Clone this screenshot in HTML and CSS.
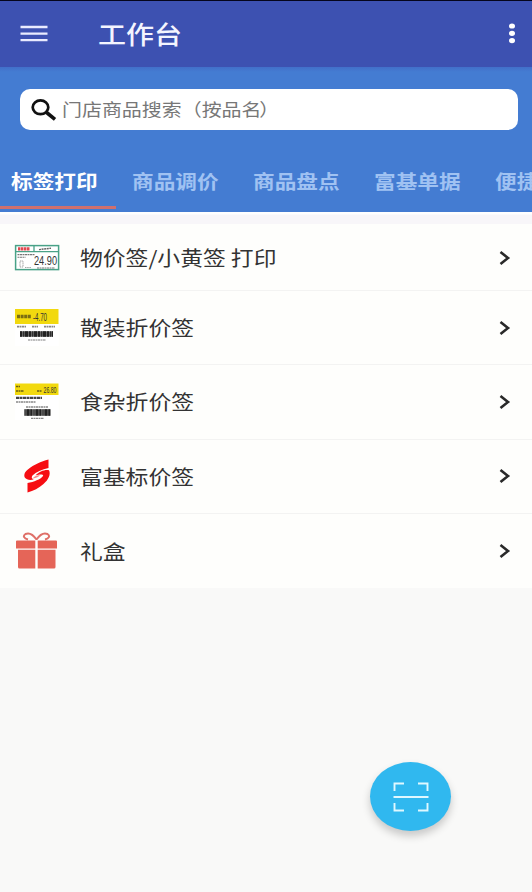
FILE: index.html
```html
<!DOCTYPE html>
<html lang="zh-CN">
<head>
<meta charset="utf-8">
<title>工作台</title>
<link rel="stylesheet" href="styles.css">
</head>
<body>
<header class="appbar">
  <svg class="menu" width="28" height="18" viewBox="0 0 28 18"><path d="M.5 2h27M.5 8.7h27M.5 15.2h27" stroke="#e9ebff" stroke-width="2.3"/></svg>
  <h1 class="title"><span class="wide">工作台</span></h1>
  <svg class="more" width="8" height="22" viewBox="0 0 8 22" fill="#fff"><ellipse cx="4" cy="3" rx="3" ry="2.6"/><ellipse cx="4" cy="10.3" rx="3" ry="2.6"/><ellipse cx="4" cy="17.6" rx="3" ry="2.6"/></svg>
</header>
<section class="top">
  <div class="search">
    <svg width="26" height="22" viewBox="0 0 26 22" fill="none" stroke="#111"><ellipse cx="9.5" cy="8.3" rx="7.8" ry="6.9" stroke-width="2.7"/><path d="M15 13l9 7.3" stroke-width="3.6"/></svg>
    <span class="placeholder wide">门店商品搜索（按品名<span class="close">）</span></span>
  </div>
  <nav class="tabs">
    <div class="tab active"><span class="wide">标签打印</span></div>
    <div class="tab"><span class="wide">商品调价</span></div>
    <div class="tab"><span class="wide">商品盘点</span></div>
    <div class="tab"><span class="wide">富基单据</span></div>
    <div class="tab"><span class="wide">便捷</span></div>
  </nav>
</section>
<main class="list">
  <div class="row first">
    <svg class="icon" width="46" height="40" viewBox="0 0 46 40">
      <rect x="1.6" y="7.6" width="43" height="24" fill="#fff" stroke="#49a287" stroke-width="1.5"/>
      <path d="M1.6 13.7h43M20 7.6v6" stroke="#49a287" stroke-width="1.3"/>
      <path d="M4 10.8h12" stroke="#e04850" stroke-width="3.2" stroke-dasharray="2.4 .5"/>
      <path d="M25 11.6l12-1.4" stroke="#666" stroke-width="1.4" stroke-dasharray="2 .6"/>
      <path d="M3.5 16.6h17M3.5 19.3h8M23 30h18" stroke="#777" stroke-width="1.1" stroke-dasharray="2 .5"/>
      <path d="M6 23h3v6H6zM11 29.5h6" fill="none" stroke="#999" stroke-width=".9" stroke-dasharray="1.5 .7"/>
      <text x="20" y="26.8" class="price" font-size="12" textLength="23" lengthAdjust="spacingAndGlyphs">24.90</text>
    </svg>
    <span class="label wide">物价签/小黄签 打印</span>
    <svg class="arrow" width="12" height="16" viewBox="0 0 12 16"><path d="M1.5 2l7.5 6-7.5 6"/></svg>
  </div>
  <div class="row">
    <svg class="icon" width="46" height="40" viewBox="0 0 46 40">
      <rect x="1" y="1" width="43.5" height="37" fill="#fff"/>
      <path d="M1 1h43.5v15H1z" fill="#f2d90e"/>
      <path d="M3 8.5h14" stroke="#7a6d12" stroke-width="3.5" stroke-dasharray="3 .6"/>
      <text x="19" y="12.5" class="price" font-size="10" textLength="14" lengthAdjust="spacingAndGlyphs">-4.70</text>
      <path d="M3 18.6h9M18 18.6h6M30 18.6h11" stroke="#888" stroke-width="1.6" stroke-dasharray="2 .5"/>
      <path d="M6 26h33" stroke="#666" stroke-width="5.5"/><path d="M6 26h33" stroke="#222" stroke-width="5.5" stroke-dasharray="2 1.2 1 .8 3 1"/>
      <path d="M14 32h18" stroke="#aaa" stroke-width="1.4" stroke-dasharray="2 .5"/>
    </svg>
    <span class="label wide">散装折价签</span>
    <svg class="arrow" width="12" height="16" viewBox="0 0 12 16"><path d="M1.5 2l7.5 6-7.5 6"/></svg>
  </div>
  <div class="row">
    <svg class="icon" width="46" height="40" viewBox="0 0 46 40">
      <rect x="1" y="1" width="43.5" height="37" fill="#fff"/>
      <path d="M1 1.5h43.5v11.5H1z" fill="#f2d90e"/>
      <path d="M2 4.5h4M2 9h8M23 9h5" stroke="#6a5f12" stroke-width="1.5" stroke-dasharray="2 .5"/>
      <text x="29.5" y="10.5" class="price" font-size="9" textLength="13" lengthAdjust="spacingAndGlyphs">26.80</text>
      <path d="M2 15.8h26" stroke="#444" stroke-width="2.3" stroke-dasharray="3 .5"/>
      <path d="M2 20h20M12 25h22M17 36.4h13" stroke="#888" stroke-width="1.3" stroke-dasharray="2 .5"/>
      <path d="M10.5 30.5h26" stroke="#777" stroke-width="6.5"/><path d="M10.5 30.5h26" stroke="#222" stroke-width="6.5" stroke-dasharray="1 1 3 .8 2 1.2"/>
    </svg>
    <span class="label wide">食杂折价签</span>
    <svg class="arrow" width="12" height="16" viewBox="0 0 12 16"><path d="M1.5 2l7.5 6-7.5 6"/></svg>
  </div>
  <div class="row">
    <svg class="icon" width="46" height="40" viewBox="0 0 46 40" fill="#f60d12">
      <path d="M34.5 3.500V12C28 13.500 22 16 18.500 19.500C17 21.500 18 23 20 23.300C16 24.500 12.500 23.800 10.800 21.500C9.500 18.500 11 15.500 14.500 13C19.500 9 27 5.500 34.500 3.500Z"/>
      <path d="M13.500 36.500V27C20 25.800 26.500 23.500 29 20C30 18.300 27 17.800 21.500 19.300C25 15.800 31 13.300 35 14.300C37 18 34.500 24 29.500 28C25 32 19.500 35 13.500 36.500Z"/>
      <path d="M19 22.500C22 22 25 20.800 26 19.300C23 19 19.500 20.500 19 22.500Z" fill="#fb8a8a"/>
    </svg>
    <span class="label wide">富基标价签</span>
    <svg class="arrow" width="12" height="16" viewBox="0 0 12 16"><path d="M1.5 2l7.5 6-7.5 6"/></svg>
  </div>
  <div class="row">
    <svg class="icon" width="46" height="40" viewBox="0 0 46 40">
      <path d="M22.5 8.5C19 3.500 15 1.500 11.500 3C8.500 5 10 7.500 14 8.500M22.500 8.500C26 3.500 30 1.500 33.500 3C36.500 5 35 7.500 31 8.500" fill="none" stroke="#df7068" stroke-width="2"/>
      <path d="M3 9.500h18.300v8H2V10.500q0-1 1-1zM23.700 9.500h18.300q1 0 1 1v7H23.700zM4 18.800h17.300V37.500H5.500q-1.500 0-1.500-1.500zM23.700 18.800h17.800V36q0 1.500-1.500 1.500H23.700z" fill="#e56558"/>
    </svg>
    <span class="label wide">礼盒</span>
    <svg class="arrow" width="12" height="16" viewBox="0 0 12 16"><path d="M1.5 2l7.5 6-7.5 6"/></svg>
  </div>
</main>
<button class="scan" aria-label="扫一扫">
  <svg width="36" height="30" viewBox="0 0 36 30" fill="none" stroke="#dff8ff" stroke-width="1.9"><path d="M1.5 9V1.5h9.500M25 1.500h9.500V9M34.500 21v7.500H25M11 28.500H1.500V21M.5 15h35"/></svg>
</button>
</body>
</html>
```
FILE: styles.css
```css
* { box-sizing: border-box; }
body {
  margin: 0;
  height: 892px;
  overflow: hidden;
  background: #f9f9f8;
  font-family: "Noto Sans CJK SC", sans-serif;
}
svg { display: block; flex: none; }
/* Labels use slightly extended letterforms */
.wide {
  display: inline-block;
  white-space: nowrap;
  transform: scaleX(1.14);
  transform-origin: left center;
}
.appbar {
  display: flex;
  align-items: center;
  height: 67px;
  border-top: 1px solid #05051c;
  padding: 0 16px 0 20px;
  background: #3d51b1;
}
.title {
  flex: 1;
  margin: 0 0 3px 50px;
  font-size: 24.6px;
  font-weight: 500;
  line-height: 36px;
  color: #f4f5ff;
}
.top {
  height: 145px;
  padding-top: 22px;
  background: linear-gradient(#426fc9, #447cd2 5px);
}
.search {
  display: flex;
  align-items: center;
  height: 41px;
  margin: 0 14px 0 20px;
  padding-left: 11px;
  border-radius: 10px;
  background: #fff;
}
.placeholder {
  margin: 0 0 2px 5px;
  font-size: 17.5px;
  line-height: 26px;
  color: #777;
}
.close { margin-left: -2px; }
.tabs {
  display: flex;
  height: 81px;
  margin-left: -5px;
  overflow: hidden;
}
.tab {
  flex: 0 0 121px;
  padding: 37px 0 0 16px;
  font-size: 19px;
  font-weight: 700;
  line-height: 28px;
  color: #a0c2f2;
}
.tab.active {
  height: 79px;
  border-bottom: 3px solid #cf706f;
  color: #fff;
}
.list {
  padding-top: 12px;
  background: linear-gradient(#fff 2px, #f8f6f9 3px);
}
.row {
  display: flex;
  align-items: center;
  height: 74.3px;
  padding: 0 21px 0 14px;
  border-bottom: 1px solid #f3f3f2;
  background: #fefefc;
}
.row.first { height: 67px; padding-top: 1px; }
.row:last-child { border-bottom: 0; }
.label {
  flex: 1;
  margin: 1px 0 0 20.4px;
  font-size: 20px;
  line-height: 30px;
  color: #333;
}
.arrow {
  fill: none;
  stroke: #292929;
  stroke-width: 2.6;
}
.price { font-family: "Liberation Sans", sans-serif; fill: #333; }
.scan {
  position: absolute;
  left: 370px;
  top: 762px;
  display: flex;
  align-items: center;
  justify-content: center;
  width: 81px;
  height: 69px;
  padding: 0;
  border: 0;
  border-radius: 50%;
  background: #30b8ef;
  box-shadow: 0 5px 8px rgba(0, 0, 0, .2);
}
```
